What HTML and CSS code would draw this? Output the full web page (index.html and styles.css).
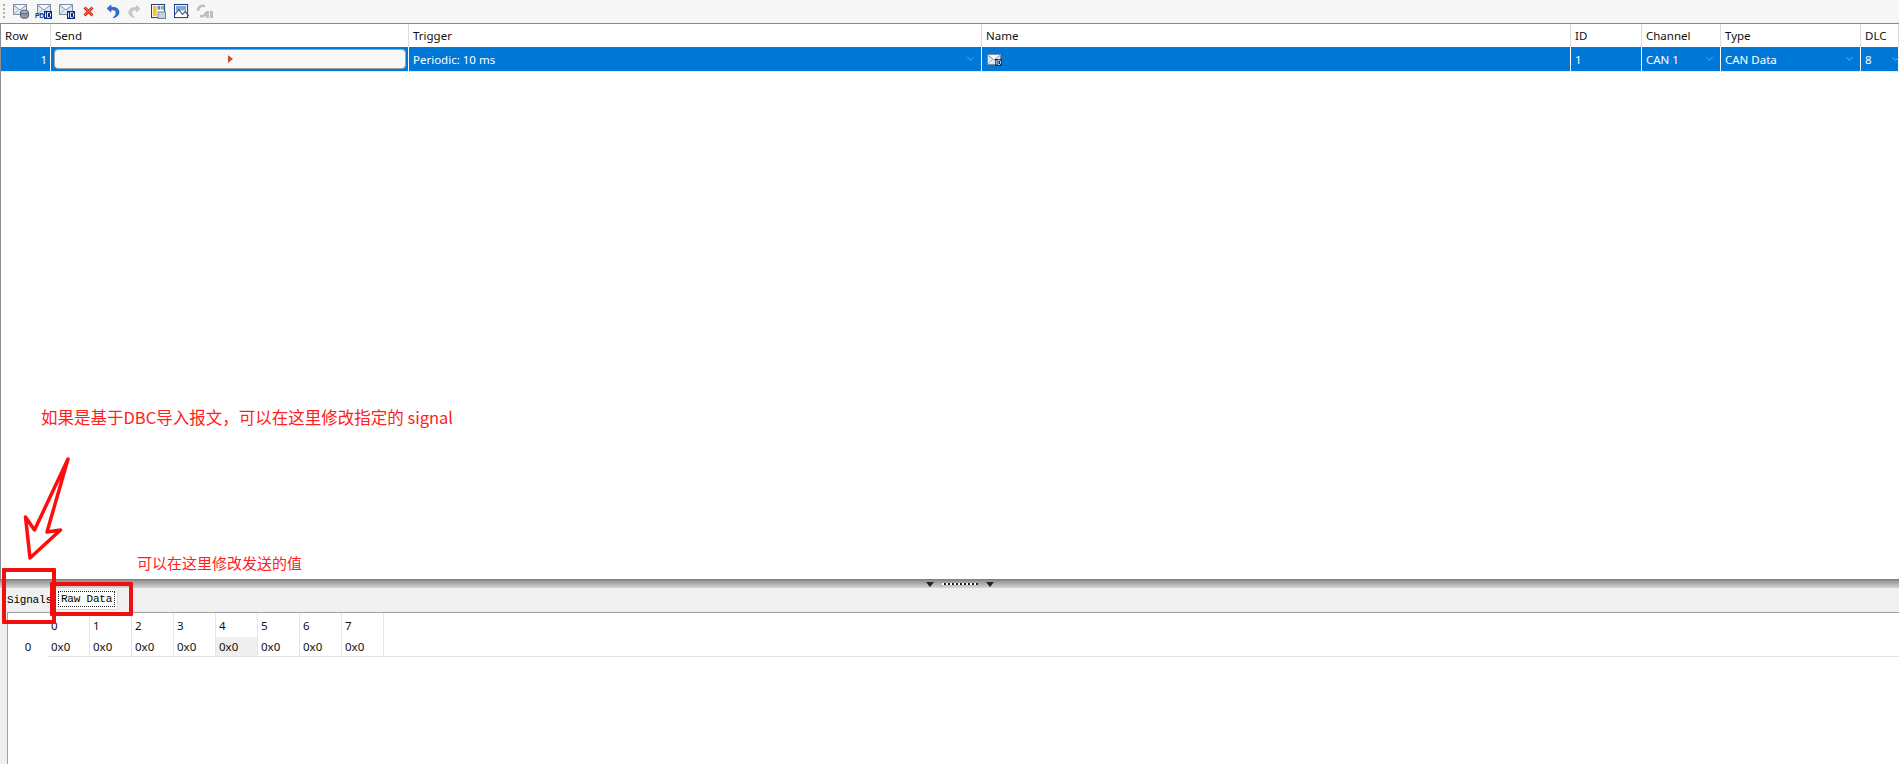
FILE: index.html
```html
<!DOCTYPE html>
<html lang="zh">
<head>
<meta charset="utf-8">
<title>CAN IG</title>
<link rel="stylesheet" href="styles.css">
</head>
<body>
<svg width="0" height="0" class="defs">
  <defs>
    <g id="env">
      <path d="M.5.5h13v10h-13z" fill="#dfe7f2" stroke="#7c8da3"/>
      <path d="M.5 1l6.500 5 6.500-5" fill="#f4f7fb" stroke="#8092a8"/>
      <path d="M1 10l4-4M13 10l-4-4" stroke="#a9b7c8" fill="none"/>
    </g>
    <g id="idbadge">
      <rect width="8" height="8" fill="#0c2c84"/>
      <path d="M1.500 1.500v5M3.500 1.500v5M3.500 1.500h2l1 1v3l-1 1h-2" stroke="#fff" fill="none" stroke-width=".9"/>
    </g>
  </defs>
</svg>
<header class="toolbar">
  <span class="grip"></span>
  <span class="tool"><svg width="16" height="16" viewBox="0 0 16 16"><use href="#env" y="1"/><path d="M7.500 9v4.500c0 1 1.800 1.800 4 1.800s4-.8 4-1.800V9" fill="#8c99a6" stroke="#556070"/><ellipse cx="11.500" cy="9" rx="4" ry="1.800" fill="#a8b3bf" stroke="#556070"/></svg></span>
  <span class="tool"><svg width="17" height="16" viewBox="0 0 17 16"><use href="#env" x="2" y="1"/><text x="0" y="15" class="fd">FD</text><use href="#idbadge" x="9" y="8"/></svg></span>
  <span class="tool"><svg width="16" height="16" viewBox="0 0 16 16"><use href="#env" y="1"/><use href="#idbadge" x="8" y="8"/></svg></span>
  <span class="tool tool-x"><svg width="11" height="11" viewBox="0 0 11 11"><path d="M1.500 1.500l8 8M9.500 1.500l-8 8" stroke="#d5301a" stroke-width="3"/><path d="M1.500 1.500l8 8M9.500 1.500l-8 8" stroke="#f6906a" stroke-width=".8"/></svg></span>
  <span class="tool"><svg width="14" height="15" viewBox="0 0 14 15"><path d="M5 1L1 4.500 5 8V5.800c3-.5 5 .5 5 3 0 2-1 3.500-3 5 4-.5 6-3 6-5.500C13 4.500 10 3 5 3.400z" fill="#2f6fd0" stroke="#1c50a8" stroke-width=".6"/></svg></span>
  <span class="tool tool-x"><svg width="13" height="15" viewBox="0 0 14 15"><path d="M9 1l4 3.500L9 8V5.800c-3-.5-5 .5-5 3 0 2 1 3.500 3 5-4-.5-6-3-6-5.500C1 4.500 4 3 9 3.400z" fill="#c9cccf" stroke="#a9acaf" stroke-width=".6"/></svg></span>
  <span class="tool"><svg width="15" height="15" viewBox="0 0 16 16"><rect x=".5" y=".5" width="14" height="14" fill="#fff" stroke="#15307f"/><rect x="2" y="2" width="4" height="11" fill="#f4c430"/><rect x="7" y="2" width="3" height="4" fill="#4d8fd8"/><rect x="11" y="2" width="3" height="4" fill="#7fb24a"/><rect x="7.500" y="8.500" width="8" height="7" fill="#c7d2df" stroke="#6d7f95"/></svg></span>
  <span class="tool"><svg width="15" height="15" viewBox="0 0 16 16"><rect x=".5" y=".5" width="14" height="14" fill="#fff" stroke="#15307f"/><rect x="2" y="2" width="11" height="5" fill="#7fa8d8"/><path d="M1 11l4-5 4 5 3-3 4 5" fill="none" stroke="#4f6070" stroke-width="1.300"/></svg></span>
  <span class="tool"><svg width="17" height="16" viewBox="0 0 17 16"><path d="M2 8c0-4 3-6 7-5M10 9c0 3-3 5-6 4" fill="none" stroke="#bcbfc2" stroke-width="2.500"/><rect x="10" y="8" width="3" height="7" fill="#bcbfc2"/><rect x="14" y="8" width="3" height="7" fill="#bcbfc2"/></svg></span>
</header>

<main class="upper">
  <div class="grid head">
    <div class="hc">Row</div><div class="hc">Send</div><div class="hc">Trigger</div><div class="hc">Name</div><div class="hc">ID</div><div class="hc">Channel</div><div class="hc">Type</div><div class="hc">DLC</div>
  </div>
  <div class="grid row">
    <div class="rc num">1</div>
    <div class="rc send"><button class="send-btn" type="button"><span class="play"></span></button></div>
    <div class="rc dd">Periodic: 10 ms<span class="chev"></span></div>
    <div class="rc"><svg class="name-ic" width="15" height="13" viewBox="0 0 15 13"><use href="#env" y="1"/><use href="#idbadge" transform="translate(8 6) scale(.85)"/></svg></div>
    <div class="rc">1</div>
    <div class="rc dd">CAN 1<span class="chev"></span></div>
    <div class="rc dd">CAN Data<span class="chev"></span></div>
    <div class="rc dd">8<span class="chev chev-end"></span></div>
  </div>
</main>

<div class="splitter">
  <span class="tri"></span>
  <span class="dots"></span>
  <span class="tri"></span>
</div>

<section class="lower">
  <nav class="tabs">
    <span class="tab">Signals</span>
    <span class="tab tab-on"><span class="tab-focus">Raw Data</span></span>
  </nav>
  <div class="panel">
    <div class="rowhead">0</div>
    <div class="bytes">
      <div class="bh">0</div><div class="bh">1</div><div class="bh">2</div><div class="bh">3</div><div class="bh">4</div><div class="bh">5</div><div class="bh">6</div><div class="bh">7</div>
      <div class="bv">0x0</div><div class="bv">0x0</div><div class="bv">0x0</div><div class="bv">0x0</div><div class="bv bv-sel">0x0</div><div class="bv">0x0</div><div class="bv">0x0</div><div class="bv">0x0</div>
    </div>
  </div>
</section>

<p class="note note-a">如果是基于DBC导入报文，可以在这里修改指定的 signal</p>
<p class="note note-b">可以在这里修改发送的值</p>
<svg class="arrow" width="60" height="110" viewBox="20 455 60 110"><path d="M68 459L34.500 530 25.500 517 30 558 60.500 530 47 532z" fill="none" stroke="#ff0d0d" stroke-width="3.500" stroke-linejoin="round"/></svg>
<span class="mark mark-a"></span>
<span class="mark mark-b"></span>
</body>
</html>
```
FILE: styles.css
```css
* { box-sizing: border-box; }
html, body { margin: 0; height: 764px; overflow: hidden; }
body {
  position: relative;
  display: flex;
  flex-direction: column;
  background: #fff;
  font-family: "Noto Sans", "Liberation Sans", sans-serif;
  font-size: 11.5px;
  color: #111;
}
.defs { position: absolute; }

.toolbar {
  height: 24px;
  flex: none;
  display: flex;
  align-items: center;
  padding: 0 0 1px 3px;
  background: #f7f7f7;
  border-bottom: 1px solid #8a8a8a;
}
.grip {
  width: 2px;
  height: 14px;
  margin-right: 4px;
  background: repeating-linear-gradient(to bottom, #b0b0b0 0 2px, transparent 2px 4px);
}
.tool {
  width: 23px;
  flex: none;
  display: flex;
  justify-content: center;
}
.tool svg { display: block; }
.tool-x svg { margin-right: 3px; }
.fd { font: bold 7px "Liberation Sans", sans-serif; fill: #0c3fa8; }

.upper {
  flex: 1;
  min-height: 0;
  border-left: 1px solid #8a8f96;
}
.grid {
  display: grid;
  grid-template-columns: 50px 358px 573px 589px 71px 79px 140px 38px;
}
.head { height: 23px; }
.hc {
  display: flex;
  align-items: center;
  padding-left: 4px;
  border-right: 1px solid #dcdcdc;
}
.row {
  height: 24px;
  background: #0078d7;
  color: #fff;
  border-bottom: 1px solid #dfe8ef;
  box-sizing: content-box;
}
.rc {
  position: relative;
  display: flex;
  align-items: center;
  padding-left: 4px;
  border-right: 1px solid #fff;
}
.num { justify-content: flex-end; padding-right: 3px; }
.send { padding: 2px 2px 2px 3px; }
.send-btn {
  display: flex;
  align-items: center;
  justify-content: center;
  width: 100%;
  height: 20px;
  padding: 0;
  background: #f8f8f8;
  border: 1px solid #a0a0a0;
  border-radius: 4px;
}
.play {
  width: 0;
  height: 0;
  border-left: 5px solid #c8502e;
  border-top: 4px solid transparent;
  border-bottom: 4px solid transparent;
}
.chev {
  position: absolute;
  right: 8px;
  top: 8px;
  width: 5px;
  height: 5px;
  border-right: 1px solid #4d9be0;
  border-bottom: 1px solid #4d9be0;
  transform: rotate(45deg);
}
.chev-end { right: 0; }
.name-ic { display: block; margin-left: 1px; }

.splitter {
  height: 9px;
  flex: none;
  display: flex;
  align-items: center;
  justify-content: center;
  padding-left: 20px;
  gap: 8px;
  background: linear-gradient(to bottom, #8c8c8c, #d6d6d6);
  border-top: 1px solid #808080;
}
.tri {
  width: 0;
  height: 0;
  border-left: 4px solid transparent;
  border-right: 4px solid transparent;
  border-top: 5px solid #222;
}
.dots {
  width: 36px;
  height: 2px;
  margin: 0 0 1px;
  background: repeating-linear-gradient(to right, #fff 0 2px, #222 2px 4px);
}

.lower {
  height: 176px;
  flex: none;
  display: flex;
  flex-direction: column;
  background: #f0f0f0;
}
.tabs {
  height: 24px;
  flex: none;
  display: flex;
  align-items: flex-start;
  padding: 2px 0 0 7px;
  font-family: "Liberation Mono", "DejaVu Sans Mono", monospace;
  font-size: 11px;
  color: #000;
}
.tab {
  display: flex;
  align-items: center;
  height: 20px;
  letter-spacing: -.2px;
}
.tab:first-child { width: 49px; }
.tab-on {
  width: 62px;
  padding: 1px 2px 2px;
  background: #fff;
  border-right: 1px solid #dcdcdc;
  border-bottom: 1px solid #dcdcdc;
}
.tab-focus {
  flex: 1;
  height: 100%;
  display: flex;
  align-items: center;
  justify-content: center;
  border: 1px dotted #222;
}
.panel {
  flex: 1;
  display: flex;
  align-items: flex-start;
  margin-left: 7px;
  background: #fff;
  border-top: 1px solid #a0a0a0;
  border-left: 1px solid #a0a0a0;
}
.rowhead {
  width: 40px;
  height: 43px;
  flex: none;
  padding-top: 26px;
  text-align: center;
}
.bytes {
  flex: 1;
  display: grid;
  grid-template-columns: repeat(8, 42px);
  grid-template-rows: 24px 19px;
  box-sizing: content-box;
  border-bottom: 1px solid #e2e2e2;
}
.bh, .bv {
  display: flex;
  align-items: center;
  padding-left: 3px;
  border-right: 1px solid #e6e6e6;
}
.bv-sel { background: #efefef; }

.note {
  position: absolute;
  margin: 0;
  font-family: "Noto Sans CJK SC", "Noto Sans", sans-serif;
  font-size: 16.5px;
  line-height: 20px;
  color: #ff2020;
  white-space: nowrap;
}
.note-a { left: 41px; top: 407px; }
.note-b { left: 137px; top: 553px; font-size: 15px; }
.arrow { position: absolute; left: 20px; top: 455px; }
.mark {
  position: absolute;
  border: 4px solid #f00e0e;
  border-radius: 1px;
}
.mark-a { left: 2px; top: 568px; width: 54px; height: 56px; }
.mark-b { left: 50px; top: 582px; width: 83px; height: 34px; }
```
